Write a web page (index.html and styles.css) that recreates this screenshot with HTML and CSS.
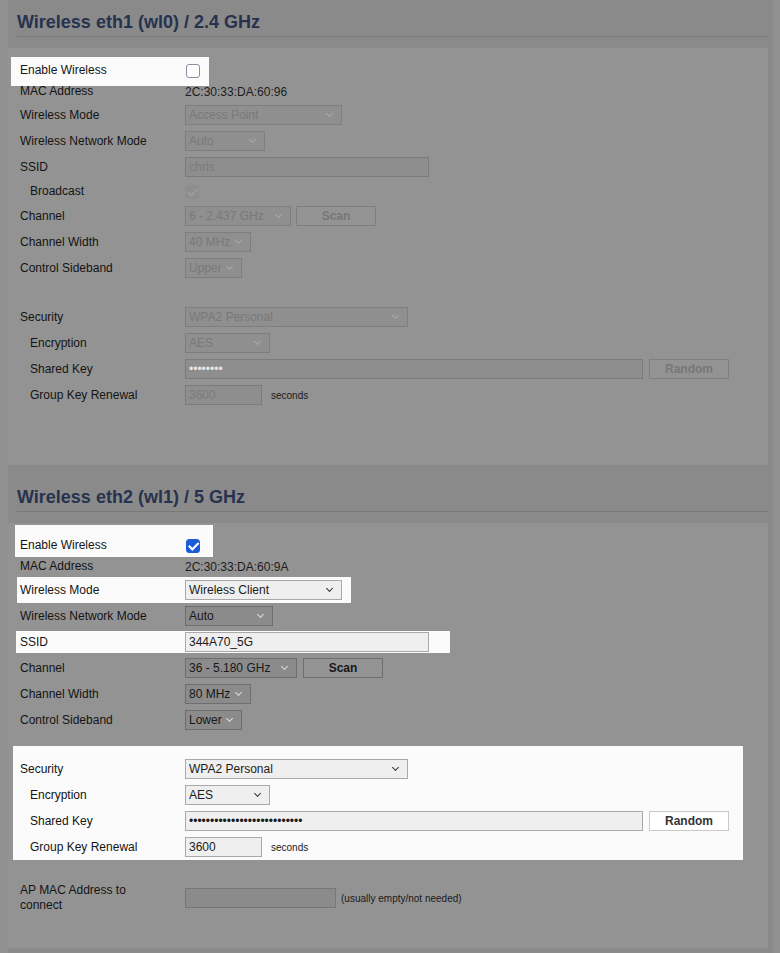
FILE: index.html
```html
<!DOCTYPE html>
<html>
<head>
<meta charset="utf-8">
<title>Wireless</title>
<link rel="stylesheet" href="styles.css">
</head>
<body>
<div class="page">
  <h2 class="sec-title">Wireless eth1 (wl0) / 2.4 GHz</h2>
  <div class="panel panel-1">
    <div class="row row-text hl hl-en1"><span class="lbl">Enable Wireless</span><input type="checkbox" class="cb"></div>
    <div class="row row-text"><span class="lbl">MAC Address</span><span class="val">2C:30:33:DA:60:96</span></div>
    <div class="row"><span class="lbl">Wireless Mode</span><span class="sel dis w-mode"><select disabled><option>Access Point</option></select></span></div>
    <div class="row"><span class="lbl">Wireless Network Mode</span><span class="sel dis w-nm1"><select disabled><option>Auto</option></select></span></div>
    <div class="row"><span class="lbl">SSID</span><input class="txt dis w-ssid" type="text" value="chris" disabled></div>
    <div class="row row-bc"><span class="lbl sub">Broadcast</span><input type="checkbox" class="cb cb-dis" checked disabled></div>
    <div class="row"><span class="lbl">Channel</span><span class="sel dis w-ch1"><select disabled><option>6 - 2.437 GHz</option></select></span><button class="btn dis btn-scan1" disabled>Scan</button></div>
    <div class="row"><span class="lbl">Channel Width</span><span class="sel dis w-cw"><select disabled><option>40 MHz</option></select></span></div>
    <div class="row"><span class="lbl">Control Sideband</span><span class="sel dis w-sb"><select disabled><option>Upper</option></select></span></div>
    <div class="spacer"></div>
    <div class="row"><span class="lbl">Security</span><span class="sel dis w-sec"><select disabled><option>WPA2 Personal</option></select></span></div>
    <div class="row"><span class="lbl sub">Encryption</span><span class="sel dis w-enc"><select disabled><option>AES</option></select></span></div>
    <div class="row"><span class="lbl sub">Shared Key</span><input class="txt dis pw w-key" type="password" value="abcdefgh" disabled><button class="btn dis btn-rand" disabled>Random</button></div>
    <div class="row"><span class="lbl sub">Group Key Renewal</span><input class="txt dis w-grk" type="text" value="3600" disabled><span class="note">seconds</span></div>
  </div>

  <h2 class="sec-title">Wireless eth2 (wl1) / 5 GHz</h2>
  <div class="panel panel-2">
    <div class="row row-text hl hl-en2"><span class="lbl">Enable Wireless</span><input type="checkbox" class="cb" checked></div>
    <div class="row row-text"><span class="lbl">MAC Address</span><span class="val">2C:30:33:DA:60:9A</span></div>
    <div class="row hl hl-mode"><span class="lbl">Wireless Mode</span><span class="sel lite w-mode"><select><option>Wireless Client</option></select></span></div>
    <div class="row"><span class="lbl">Wireless Network Mode</span><span class="sel dim w-nm2"><select><option>Auto</option></select></span></div>
    <div class="row hl hl-ssid"><span class="lbl">SSID</span><input class="txt lite w-ssid" type="text" value="344A70_5G"></div>
    <div class="row"><span class="lbl">Channel</span><span class="sel dim w-ch2"><select><option>36 - 5.180 GHz</option></select></span><button class="btn dim btn-scan2">Scan</button></div>
    <div class="row"><span class="lbl">Channel Width</span><span class="sel dim w-cw"><select><option>80 MHz</option></select></span></div>
    <div class="row"><span class="lbl">Control Sideband</span><span class="sel dim w-sb"><select><option>Lower</option></select></span></div>
    <div class="spacer spacer-2"></div>
    <div class="hl-block">
      <div class="row"><span class="lbl">Security</span><span class="sel lite w-sec"><select><option>WPA2 Personal</option></select></span></div>
      <div class="row"><span class="lbl sub">Encryption</span><span class="sel lite w-enc"><select><option>AES</option></select></span></div>
      <div class="row"><span class="lbl sub">Shared Key</span><input class="txt lite pw w-key" type="password" value="abcdefghijklmnopqrstuvwxyz0"><button class="btn lite btn-rand">Random</button></div>
      <div class="row"><span class="lbl sub">Group Key Renewal</span><input class="txt lite w-grk" type="text" value="3600"><span class="note">seconds</span></div>
    </div>
    <div class="row row-ap"><span class="lbl">AP MAC Address to connect</span><input class="txt dim2 w-ap" type="text" value=""><span class="note">(usually empty/not needed)</span></div>
  </div>
</div>
</body>
</html>
```

FILE: styles.css
```css
* { box-sizing: border-box; }

html, body {
  margin: 0;
  padding: 0;
}

body {
  background: #919191;
  font-family: "Liberation Sans", Arial, sans-serif;
  font-size: 12px;
  color: #141414;
}

.page {
  margin-left: 8px;
  width: 765px;
  padding: 0 5px 5px 0;
  background: #8a8a8a;
}

.sec-title {
  margin: 0 0 11px 9px;
  padding: 11px 0 2px 0;
  height: 37px;
  line-height: 22px;
  font-size: 18px;
  font-weight: bold;
  color: #27324f;
  border-bottom: 1px solid #787878;
}

.panel + .sec-title { margin-top: 10px; }

.panel {
  background: #939393;
  padding: 12px 0 57px 12px;
}

.panel-2 { padding-bottom: 35px; }

.row {
  display: flex;
  align-items: center;
  min-height: 26px;
}

.row-text { min-height: 21px; }
.row-bc { min-height: 23px; }

.lbl {
  flex: none;
  width: 165px;
  padding-right: 15px;
  line-height: 15px;
}

.lbl.sub { padding-left: 10px; }

.val { color: #1c1c1c; }

.spacer { height: 23px; }
.spacer-2 { height: 13px; }

/* highlight boxes */
.hl { background: #fbfbfb; width: fit-content; }

.hl-en1 {
  min-height: 29px;
  margin: -3px 0 -5px -9px;
  padding: 3px 9px 5px 9px;
}

.hl-en2 {
  min-height: 32px;
  margin: -10px 0 -1px -5px;
  padding: 10px 13px 1px 5px;
}

.hl-mode {
  margin-left: -3px;
  padding: 0 9px 0 3px;
}

.hl-ssid {
  min-height: 22px;
  margin: 2px 0 2px -4px;
  padding: 0 21px 0 4px;
}

.hl-block {
  background: #fbfbfb;
  width: 730px;
  margin-left: -7px;
  padding: 10px 0 0 7px;
}

/* checkbox */
.cb {
  appearance: none;
  -webkit-appearance: none;
  position: relative;
  margin: 0 0 0 1px;
  width: 14px;
  height: 14px;
  border: 1.5px solid #8d8da2;
  border-radius: 3px;
  background: #ffffff;
}

.cb:checked {
  background: #1b5dd6;
  border-color: #1b5dd6;
}

.cb:checked::before {
  content: "";
  position: absolute;
  left: 3.5px;
  top: 0.5px;
  width: 3.5px;
  height: 7.5px;
  border-right: 2px solid #ffffff;
  border-bottom: 2px solid #ffffff;
  transform: rotate(45deg);
}

.cb.cb-dis {
  margin-left: 0;
  background: #8e8e8e;
  border-color: #8e8e8e;
}

.cb.cb-dis::before {
  border-color: #9c9c9c;
}

/* selects */
.sel {
  position: relative;
  display: inline-block;
  height: 20px;
}

.sel select {
  appearance: none;
  -webkit-appearance: none;
  display: block;
  width: 100%;
  height: 20px;
  margin: 0;
  padding: 0 3px;
  border: 1px solid #7d7d7d;
  border-radius: 0;
  font-family: "Liberation Sans", Arial, sans-serif;
  font-size: 12px;
  line-height: 18px;
  outline: none;
}

.sel::after {
  content: "";
  position: absolute;
  right: 10px;
  top: 6px;
  width: 4px;
  height: 4px;
  border-right: 1px solid #333;
  border-bottom: 1px solid #333;
  transform: rotate(45deg);
  pointer-events: none;
}

.sel.dis select {
  background: #8f8f8f;
  border-color: #7e7e7e;
  color: #797979;
  opacity: 1;
}
.sel.dis::after { border-color: #aaaaaa; }

.sel.dim select {
  background: #8b8b8b;
  border-color: #6e6e6e;
  color: #171717;
}
.sel.dim::after { border-color: #dddddd; }

.sel.lite select {
  background: #efefef;
  border-color: #a9a9a9;
  color: #1b1b1b;
}
.sel.lite::after { border-color: #333333; }

/* text inputs */
.txt {
  height: 20px;
  margin: 0;
  padding: 0 3px;
  border: 1px solid #7d7d7d;
  border-radius: 0;
  font-family: "Liberation Sans", Arial, sans-serif;
  font-size: 12px;
  outline: none;
}

.txt.dis {
  background: #8e8e8e;
  border-color: #7b7b7b;
  color: #7b7b7b;
}

.txt.dis.pw { color: #e6e6e6; }

.txt.lite {
  background: #efefef;
  border-color: #a9a9a9;
  color: #1b1b1b;
}

.txt.dim2 {
  background: #8b8b8b;
  border-color: #777777;
}

/* buttons */
.btn {
  width: 80px;
  height: 20px;
  margin: 0 0 0 5px;
  padding: 0;
  border: 1px solid #7d7d7d;
  border-radius: 0;
  font-family: "Liberation Sans", Arial, sans-serif;
  font-size: 12px;
  font-weight: bold;
}

.btn.dis {
  background: #939393;
  border-color: #7e7e7e;
  color: #777777;
}

.btn.dim {
  background: #939393;
  border-color: #6e6e6e;
  color: #171717;
}

.btn.lite {
  background: #ffffff;
  border-color: #c9c9c9;
  color: #333333;
}

.btn-scan2, .btn-rand { margin-left: 6px; }

.note {
  margin-left: 9px;
  font-size: 10px;
  color: #1a1a1a;
}

.row-ap {
  margin-top: 23px;
  min-height: 30px;
}

.row-ap .note { margin-left: 5px; }

/* widths */
.w-mode { width: 157px; }
.w-nm1 { width: 80px; }
.w-nm2 { width: 88px; }
.w-ssid { width: 244px; }
.w-ch1 { width: 106px; }
.w-ch2 { width: 112px; }
.w-cw { width: 66px; }
.w-sb { width: 57px; }
.w-sec { width: 223px; }
.w-enc { width: 85px; }
.w-key { width: 458px; }
.w-grk { width: 77px; }
.w-ap { width: 151px; }
```
